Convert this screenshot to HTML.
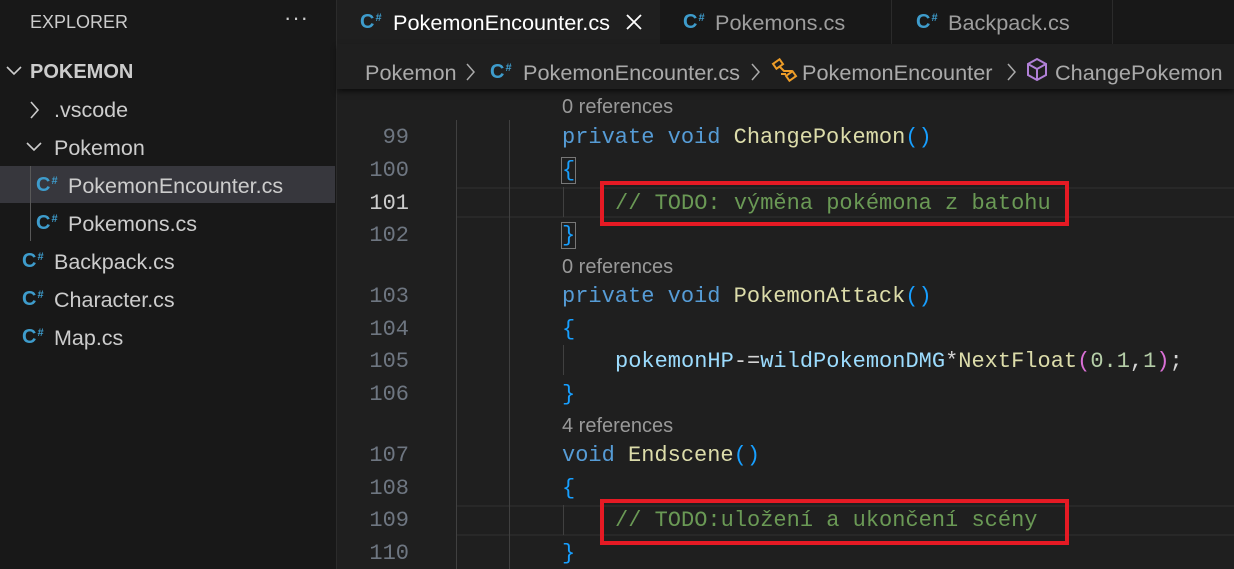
<!DOCTYPE html><html><head><style>
body{margin:0;width:1234px;height:569px;background:#1f1f1f;overflow:hidden;position:relative;font-family:"Liberation Sans",sans-serif}
.a{position:absolute;white-space:pre}
.side{position:absolute;left:0;top:0;width:336px;height:569px;background:#181818;border-right:1px solid #2b2b2b}
.st{color:#ccc;font-size:21.5px}
.cs{position:absolute;color:#3e9ccc;font-weight:bold;font-size:20px;font-family:"Liberation Sans",sans-serif}
.cs sup{font-size:11px;vertical-align:7px;margin-left:1px}
.tabs{position:absolute;left:337px;top:0;width:897px;height:44px;background:#181818}
.mono{font-family:"Liberation Mono",monospace;font-size:22px}
.ln{color:#6e7681;text-align:right;width:70px;left:339px}
.k{color:#569cd6}.f{color:#dcdcaa}.v{color:#9cdcfe}.c{color:#6a9955}.b{color:#179fff}.n{color:#b5cea8}.w{color:#d4d4d4}
.ref{color:#999;font-size:20px;left:562px}
.g{position:absolute;width:1px;background:#404040}
.box{position:absolute;border:4px solid #e51a24;box-sizing:border-box}
.bc{color:#aaa;font-size:21.7px}
</style></head><body>
<div class="side">
<div class="a st" style="left:30px;top:12px;font-size:18px">EXPLORER</div>
<div class="a st" style="left:284px;top:5px;font-size:22px;letter-spacing:1px">···</div>
<svg class="a" style="left:5px;top:64px" width="18" height="14"><path d="M2 3l7 7 7-7" stroke="#ccc" stroke-width="1.6" fill="none"/></svg>
<div class="a st" style="left:30px;top:61px;font-weight:bold;font-size:20px">POKEMON</div>
<svg class="a" style="left:28px;top:100px" width="14" height="20"><path d="M3 2l7 8-7 8" stroke="#ccc" stroke-width="1.6" fill="none"/></svg>
<div class="a st" style="left:54px;top:98px">.vscode</div>
<svg class="a" style="left:25px;top:140px" width="18" height="14"><path d="M2 3l7 7 7-7" stroke="#ccc" stroke-width="1.6" fill="none"/></svg>
<div class="a st" style="left:54px;top:136px">Pokemon</div>
<div class="a" style="left:0;top:166px;width:335px;height:37px;background:#37373d"></div>
<div class="a" style="left:30px;top:166px;width:1px;height:75px;background:#585858"></div>
<div class="cs" style="left:36px;top:174px">C<sup>#</sup></div><div class="a st" style="left:68px;top:174px">PokemonEncounter.cs</div>
<div class="cs" style="left:36px;top:212px">C<sup>#</sup></div><div class="a st" style="left:68px;top:212px">Pokemons.cs</div>
<div class="cs" style="left:22px;top:250px">C<sup>#</sup></div><div class="a st" style="left:54px;top:250px">Backpack.cs</div>
<div class="cs" style="left:22px;top:288px">C<sup>#</sup></div><div class="a st" style="left:54px;top:288px">Character.cs</div>
<div class="cs" style="left:22px;top:326px">C<sup>#</sup></div><div class="a st" style="left:54px;top:326px">Map.cs</div>
</div>
<div class="tabs">
<div class="a" style="left:0;top:0;width:323px;height:44px;background:#1f1f1f"></div>
<div class="a" style="left:554px;top:0;width:1px;height:48px;background:#2b2b2b"></div>
<div class="a" style="left:775px;top:0;width:1px;height:48px;background:#2b2b2b"></div>
<div class="cs" style="left:23px;top:11px">C<sup>#</sup></div><div class="a" style="left:56px;top:10px;color:#fff;font-size:21.7px">PokemonEncounter.cs</div>
<svg class="a" style="left:288px;top:13px" width="18" height="18"><path d="M2 2l14 14M16 2L2 16" stroke="#fff" stroke-width="1.8"/></svg>
<div class="cs" style="left:346px;top:11px">C<sup>#</sup></div><div class="a" style="left:378px;top:10px;color:#9d9d9d;font-size:21.7px">Pokemons.cs</div>
<div class="cs" style="left:579px;top:11px">C<sup>#</sup></div><div class="a" style="left:611px;top:10px;color:#9d9d9d;font-size:21.7px">Backpack.cs</div>
</div>
<div class="a" style="left:337px;top:44px;width:897px;height:45px;background:#1f1f1f;box-shadow:0 3px 5px #0008"></div>
<div class="a bc" style="left:365px;top:60px">Pokemon</div>
<svg class="a" style="left:465px;top:62px" width="12" height="20"><path d="M2 2l7 8-7 8" stroke="#aaa" stroke-width="1.5" fill="none"/></svg>
<div class="cs" style="left:490px;top:61px">C<sup>#</sup></div><div class="a bc" style="left:523px;top:60px">PokemonEncounter.cs</div>
<svg class="a" style="left:750px;top:62px" width="12" height="20"><path d="M2 2l7 8-7 8" stroke="#aaa" stroke-width="1.5" fill="none"/></svg>
<svg class="a" style="left:771px;top:57px" width="28" height="26"><g stroke="#ee9d28" stroke-width="2" fill="none"><rect x="3" y="4" width="8" height="6" transform="rotate(-35 7 7)"/><rect x="16" y="16" width="8" height="6" transform="rotate(-35 20 19)"/><path d="M9 10l4 4h8M10 17h5"/></g></svg>
<div class="a bc" style="left:802px;top:60px">PokemonEncounter</div>
<svg class="a" style="left:1006px;top:62px" width="12" height="20"><path d="M2 2l7 8-7 8" stroke="#aaa" stroke-width="1.5" fill="none"/></svg>
<svg class="a" style="left:1025px;top:57px" width="24" height="26"><g stroke="#b180d7" stroke-width="2" fill="none"><path d="M12 2l9 5v11l-9 5-9-5V7z"/><path d="M3 7l9 5 9-5M12 12v11"/></g></svg>
<div class="a bc" style="left:1055px;top:60px">ChangePokemon</div>

<div class="a" style="left:457px;top:187px;width:777px;height:31px;border-top:2px solid #282828;border-bottom:2px solid #282828;box-sizing:border-box"></div>
<div class="a" style="left:457px;top:505px;width:777px;height:31px;border-top:2px solid #282828;border-bottom:2px solid #282828;box-sizing:border-box"></div>
<div class="g" style="left:456px;top:120px;height:449px"></div>
<div class="g" style="left:509px;top:120px;height:449px"></div>
<div class="g" style="left:563px;top:187px;height:30px"></div>
<div class="g" style="left:563px;top:345px;height:30px"></div>
<div class="g" style="left:563px;top:505px;height:30px"></div>

<div class="a ref" style="top:96px">0 references</div>
<div class="a ref" style="top:256px">0 references</div>
<div class="a ref" style="top:415px">4 references</div>

<div class="a mono ln" style="top:125px">99</div>
<div class="a mono ln" style="top:158px">100</div>
<div class="a mono ln" style="top:191px;color:#ccc">101</div>
<div class="a mono ln" style="top:223px">102</div>
<div class="a mono ln" style="top:284px">103</div>
<div class="a mono ln" style="top:317px">104</div>
<div class="a mono ln" style="top:349px">105</div>
<div class="a mono ln" style="top:382px">106</div>
<div class="a mono ln" style="top:443px">107</div>
<div class="a mono ln" style="top:476px">108</div>
<div class="a mono ln" style="top:508px">109</div>
<div class="a mono ln" style="top:541px">110</div>

<div class="a mono" style="left:562px;top:125px"><span class="k">private void </span><span class="f">ChangePokemon</span><span class="b">()</span></div>
<div class="a mono b" style="left:562px;top:158px;outline:1px solid #777">{</div>
<div class="a mono c" style="left:615px;top:191px">// TODO: výměna pokémona z batohu</div>
<div class="a mono b" style="left:562px;top:223px;outline:1px solid #777">}</div>
<div class="a mono" style="left:562px;top:284px"><span class="k">private void </span><span class="f">PokemonAttack</span><span class="b">()</span></div>
<div class="a mono b" style="left:562px;top:317px">{</div>
<div class="a mono" style="left:615px;top:349px"><span class="v">pokemonHP</span><span class="w">-=</span><span class="v">wildPokemonDMG</span><span class="w">*</span><span class="f">NextFloat</span><span style="color:#da70d6">(</span><span class="n">0.1</span><span class="w">,</span><span class="n">1</span><span style="color:#da70d6">)</span><span class="w">;</span></div>
<div class="a mono b" style="left:562px;top:382px">}</div>
<div class="a mono" style="left:562px;top:443px"><span class="k">void </span><span class="f">Endscene</span><span class="b">()</span></div>
<div class="a mono b" style="left:562px;top:476px">{</div>
<div class="a mono c" style="left:615px;top:508px">// TODO:uložení a ukončení scény</div>
<div class="a mono b" style="left:562px;top:541px">}</div>

<div class="box" style="left:600px;top:181px;width:469px;height:45px"></div>
<div class="box" style="left:600px;top:499px;width:469px;height:46px"></div>
</body></html>
